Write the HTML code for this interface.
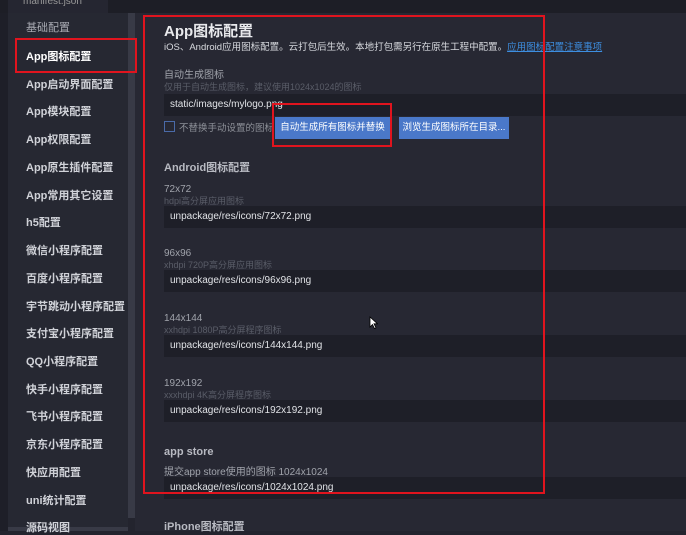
<!DOCTYPE html>
<html><head><meta charset="utf-8"><style>
*{margin:0;padding:0;box-sizing:border-box}
body{width:686px;height:531px;overflow:hidden;background:#23242e;font-family:"Liberation Sans","Noto Sans CJK SC",sans-serif;position:relative;color:#d4d6dc;line-height:1.2}
.a{position:absolute;white-space:nowrap}
.top{left:0;top:0;width:686px;height:13px;background:#1d1e26}
.tab{left:8px;top:0;width:100px;height:13px;background:#252631;font-size:10px;color:#999;line-height:4px;padding-left:15px}
.strip{left:0;top:13px;width:8px;height:518px;background:#1e1f28}
.side{left:8px;top:13px;width:120px;height:518px;background:#262832}
.sb{left:128px;top:13px;width:7px;height:505px;background:#383a46}
.main{left:135px;top:13px;width:551px;height:518px;background:#272833}
.si{left:26px;font-size:11px;font-weight:bold;color:#d0d2d8;margin-top:3px}
.red{border:2px solid #e0141e}
.inp{left:164px;width:522px;height:22px;background:#1e1f28;font-size:10px;color:#e0e2e6;padding-left:6px;line-height:22px}
.lab{left:164px;font-size:10px;color:#a0a3ab;margin-top:3px}
.hint{left:164px;font-size:9px;color:#5a5d68;margin-top:2px}
.h2{left:164px;font-size:11px;font-weight:bold;color:#b8bac2;margin-top:3px}
.btn{height:22px;background:#4a78c9;color:#fff;font-size:9.5px;line-height:22px;text-align:center}
</style></head><body>
<div class="a top"></div><div class="a tab">manifest.json</div>
<div class="a strip"></div><div class="a side"></div><div class="a sb"></div><div class="a main"></div>
<div class="a" style="left:8px;top:527px;width:120px;height:4px;background:#383a46"></div>
<div class="a si" style="top:19px;font-weight:normal;color:#a8aab2">基础配置</div>
<div class="a si" style="top:48px;color:#fff">App图标配置</div>
<div class="a si" style="top:76px">App启动界面配置</div>
<div class="a si" style="top:103px">App模块配置</div>
<div class="a si" style="top:131px">App权限配置</div>
<div class="a si" style="top:159px">App原生插件配置</div>
<div class="a si" style="top:187px">App常用其它设置</div>
<div class="a si" style="top:214px">h5配置</div>
<div class="a si" style="top:242px">微信小程序配置</div>
<div class="a si" style="top:270px">百度小程序配置</div>
<div class="a si" style="top:298px">宇节跳动小程序配置</div>
<div class="a si" style="top:325px">支付宝小程序配置</div>
<div class="a si" style="top:353px">QQ小程序配置</div>
<div class="a si" style="top:381px">快手小程序配置</div>
<div class="a si" style="top:408px">飞书小程序配置</div>
<div class="a si" style="top:436px">京东小程序配置</div>
<div class="a si" style="top:464px">快应用配置</div>
<div class="a si" style="top:492px">uni统计配置</div>
<div class="a si" style="top:519px">源码视图</div>

<div class="a" style="left:164px;top:22px;font-size:15px;font-weight:bold;color:#e8e9ec;line-height:19px">App图标配置</div>
<div class="a" style="left:164px;top:42px;font-size:9.5px;color:#d8dadf;line-height:12px">iOS、Android应用图标配置。云打包后生效。本地打包需另行在原生工程中配置。<span style="color:#3d8ee0;text-decoration:underline">应用图标配置注意事项</span></div>
<div class="a lab" style="top:67px">自动生成图标</div>
<div class="a hint" style="top:80px">仅用于自动生成图标，建议使用1024x1024的图标</div>
<div class="a inp" style="top:94px">static/images/mylogo.png</div>
<div class="a" style="left:164px;top:121px;width:11px;height:11px;border:1px solid #4a6aa8"></div>
<div class="a lab" style="left:179px;top:120px;color:#8d9098;font-size:9.5px">不替换手动设置的图标</div>
<div class="a btn" style="left:275px;top:117px;width:115px">自动生成所有图标并替换</div>
<div class="a btn" style="left:399px;top:117px;width:110px">浏览生成图标所在目录...</div>
<div class="a h2" style="top:159px">Android图标配置</div>
<div class="a lab" style="top:181px">72x72</div><div class="a hint" style="top:194px">hdpi高分屏应用图标</div>
<div class="a inp" style="top:206px">unpackage/res/icons/72x72.png</div>
<div class="a lab" style="top:245px">96x96</div><div class="a hint" style="top:258px">xhdpi 720P高分屏应用图标</div>
<div class="a inp" style="top:270px">unpackage/res/icons/96x96.png</div>
<div class="a lab" style="top:310px">144x144</div><div class="a hint" style="top:323px">xxhdpi 1080P高分屏程序图标</div>
<div class="a inp" style="top:335px">unpackage/res/icons/144x144.png</div>
<div class="a lab" style="top:375px">192x192</div><div class="a hint" style="top:388px">xxxhdpi 4K高分屏程序图标</div>
<div class="a inp" style="top:400px">unpackage/res/icons/192x192.png</div>
<div class="a h2" style="top:443px">app store</div>
<div class="a lab" style="top:464px">提交app store使用的图标 1024x1024</div>
<div class="a inp" style="top:477px">unpackage/res/icons/1024x1024.png</div>
<div class="a h2" style="top:518px">iPhone图标配置</div>

<div class="a red" style="left:15px;top:38px;width:122px;height:35px"></div>
<div class="a red" style="left:143px;top:15px;width:402px;height:479px"></div>
<div class="a red" style="left:272px;top:103px;width:120px;height:44px"></div>
<svg class="a" style="left:369px;top:316px" width="9" height="13" viewBox="0 0 9 13"><path d="M1 1v10l2.5-2.5 2 4 1.5-.7-2-4h3.5z" fill="#fff" stroke="#000" stroke-width=".8"/></svg>
</body></html>
